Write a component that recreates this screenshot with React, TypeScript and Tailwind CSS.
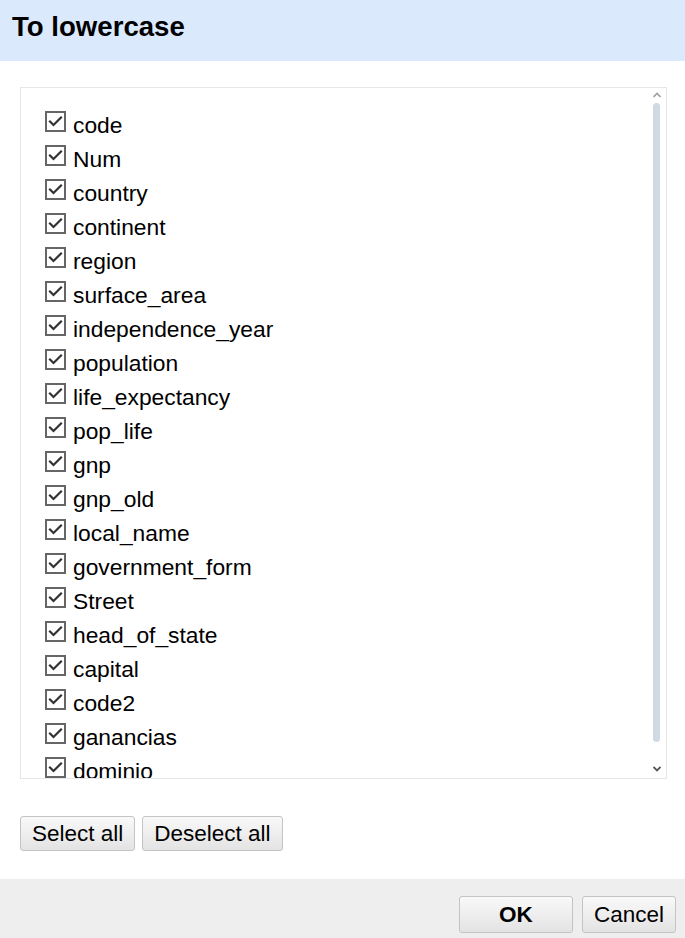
import React from "react";

const items = [
  "code",
  "Num",
  "country",
  "continent",
  "region",
  "surface_area",
  "independence_year",
  "population",
  "life_expectancy",
  "pop_life",
  "gnp",
  "gnp_old",
  "local_name",
  "government_form",
  "Street",
  "head_of_state",
  "capital",
  "code2",
  "ganancias",
  "dominio",
];

function Check() {
  return (
    <svg width="21" height="21" viewBox="0 0 21 21" className="shrink-0 mt-[3px]">
      <rect x="1" y="1" width="19" height="19" fill="#ffffff" stroke="#666666" strokeWidth="2" />
      <path d="M5 10.5 L8.5 14 L16 6.5" fill="none" stroke="#333333" strokeWidth="2.2" strokeLinecap="square" />
    </svg>
  );
}

const btn =
  "h-[35px] px-[11px] rounded-[3px] border border-[#c4c4c4] bg-gradient-to-b from-[#f9f9f9] to-[#e3e3e3] text-[22.5px] leading-[33px] text-black";

export default function App() {
  return (
    <div
      className="w-full h-[938px] flex flex-col bg-white text-black"
      style={{ fontFamily: '"Liberation Sans", Arial, sans-serif' }}
    >
      <div className="h-[61px] shrink-0 bg-[#dbe9fc] pl-3 pt-[12px]">
        <h1 className="text-[27.6px] leading-[30px] font-bold">To lowercase</h1>
      </div>

      <div className="flex-1 px-5 pt-[26px] flex flex-col">
        <div className="h-[692px] w-[647px] border border-[#e6e6e6] flex overflow-hidden">
          <div className="flex-1 overflow-hidden pl-[24px] pt-[20px]">
            {items.map((it) => (
              <div key={it} className="h-[34px] flex items-start gap-[7px]">
                <Check />
                <span className="text-[22.8px] leading-[34px] whitespace-nowrap">{it}</span>
              </div>
            ))}
          </div>
          <div className="w-[16px] shrink-0 flex flex-col items-center pr-[3px]">
            <svg width="8" height="6" viewBox="0 0 8 6" className="mt-[4px]">
              <path d="M0.5 5 L4 1.5 L7.5 5" fill="none" stroke="#a0a0a0" strokeWidth="1.6" />
            </svg>
            <div className="mt-[5px] w-[7px] h-[639px] rounded-full bg-[#cfdae5]" />
            <div className="flex-1" />
            <svg width="8" height="6" viewBox="0 0 8 6" className="mb-[6px]">
              <path d="M0.5 1 L4 4.5 L7.5 1" fill="none" stroke="#555555" strokeWidth="1.8" />
            </svg>
          </div>
        </div>

        <div className="mt-[37px] flex gap-[7px]">
          <button className={btn}>Select all</button>
          <button className={btn}>Deselect all</button>
        </div>
      </div>

      <div className="h-[59px] shrink-0 bg-[#eeeeee] flex justify-end items-start gap-[9px] pr-[9px] pt-[17px]">
        <button className={btn + " h-[37px] w-[114px] font-bold leading-[35px]"}>OK</button>
        <button className={btn + " h-[37px] leading-[35px]"}>Cancel</button>
      </div>
    </div>
  );
}
